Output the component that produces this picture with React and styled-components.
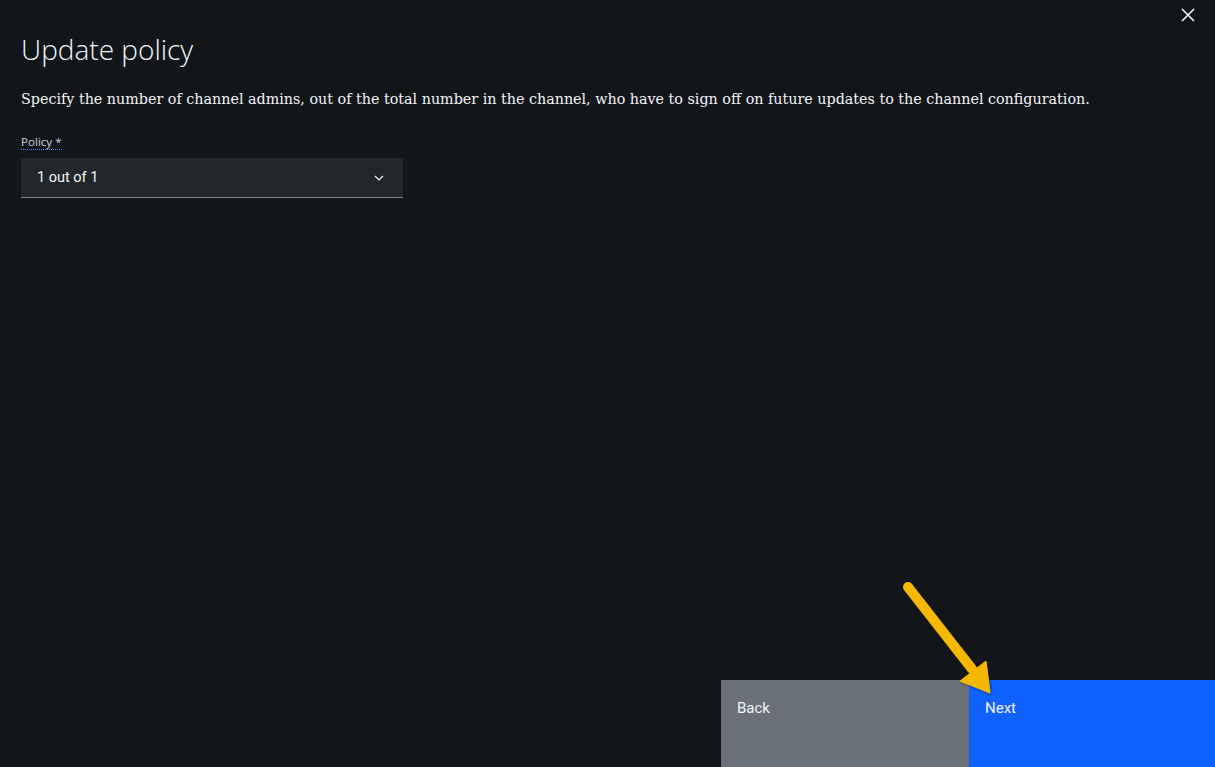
import React from "react";
import styled, { createGlobalStyle } from "styled-components";

const GlobalStyle = createGlobalStyle`
    html, body {
        margin: 0;
        padding: 0;
        background: #121619;
    }
    * {
        box-sizing: border-box;
    }
`;

function App() {
    return (
        <Page>
            <GlobalStyle />
            <CloseButton aria-label="Close">
                <svg width="16" height="16" viewBox="0 0 16 16">
                    <path d="M2 2 L14 14 M14 2 L2 14" stroke="#f2f4f8" strokeWidth="1.6" />
                </svg>
            </CloseButton>
            <Content>
                <Title>Update policy</Title>
                <Description>
                    Specify the number of channel admins, out of the total number in the channel, who have to sign off on future updates to the channel configuration.
                </Description>
                <Field>
                    <Label>Policy *</Label>
                    <Select>
                        <span>1 out of 1</span>
                        <svg width="12" height="12" viewBox="0 0 12 12">
                            <path d="M2 4 L6 8 L10 4" stroke="#f2f4f8" strokeWidth="1.2" fill="none" />
                        </svg>
                    </Select>
                </Field>
            </Content>
            <Footer>
                <FooterButton kind="secondary" width={248}>Back</FooterButton>
                <FooterButton kind="primary" width={246}>Next</FooterButton>
                <Arrow width="100" height="120" viewBox="0 0 100 120">
                    <defs>
                        <filter id="shadow" x="-20%" y="-20%" width="140%" height="140%">
                            <feDropShadow dx="1" dy="1" stdDeviation="1.2" floodColor="#000" floodOpacity="0.5" />
                        </filter>
                    </defs>
                    <g filter="url(#shadow)" fill="#f5b800" stroke="#f5b800">
                        <line x1="10" y1="6" x2="74" y2="88" strokeWidth="10" strokeLinecap="round" />
                        <polygon points="92,112 62,100 88,80" strokeWidth="1" strokeLinejoin="round" />
                    </g>
                </Arrow>
            </Footer>
        </Page>
    );
}

const Page = styled.div`
    position: relative;
    display: flex;
    flex-direction: column;
    width: 100%;
    height: 767px;
    background: #121619;
    overflow: hidden;
`

const CloseButton = styled.button`
    position: absolute;
    top: 6px;
    right: 18px;
    width: 18px;
    height: 18px;
    padding: 0;
    border: none;
    background: none;
    display: flex;
    align-items: center;
    justify-content: center;
`

const Content = styled.div`
    padding: 29px 21px 0;
`

const Title = styled.h2`
    margin: 0;
    font-family: "Open Sans", sans-serif;
    font-weight: 300;
    font-size: 28px;
    line-height: 40px;
    color: #f2f4f8;
`

const Description = styled.p`
    margin: 20px 0 0;
    font-family: "DejaVu Serif", serif;
    font-size: 14.3px;
    line-height: 20px;
    color: #f2f4f8;
`

const Field = styled.div`
    margin-top: 23px;
    width: 382px;
`

const Label = styled.span`
    display: inline-block;
    font-family: "Noto Sans", sans-serif;
    font-size: 11.5px;
    line-height: 15px;
    color: #c1c7cd;
    border-bottom: 1px dotted #4589ff;
`

const Select = styled.div`
    margin-top: 8px;
    height: 40px;
    display: flex;
    align-items: center;
    justify-content: space-between;
    padding: 0 18px 0 16px;
    background: #21272a;
    border-bottom: 1px solid #7a8086;
    font-family: "Roboto", sans-serif;
    font-size: 14.5px;
    color: #f2f4f8;
`

const Footer = styled.div`
    position: relative;
    margin-top: auto;
    align-self: flex-end;
    display: flex;
    height: 87px;
`

const FooterButton = styled.button`
    width: ${props => props.width}px;
    border: none;
    margin: 0;
    padding: 19px 16px 0;
    text-align: left;
    display: flex;
    align-items: flex-start;
    font-family: "Roboto", sans-serif;
    font-size: 15px;
    color: #f2f4f8;
    background: ${props => props.kind === "primary" ? "#0f62fe" : "#697077"};
`

const Arrow = styled.svg`
    position: absolute;
    left: 177px;
    top: -99px;
    pointer-events: none;
`

export default App;
